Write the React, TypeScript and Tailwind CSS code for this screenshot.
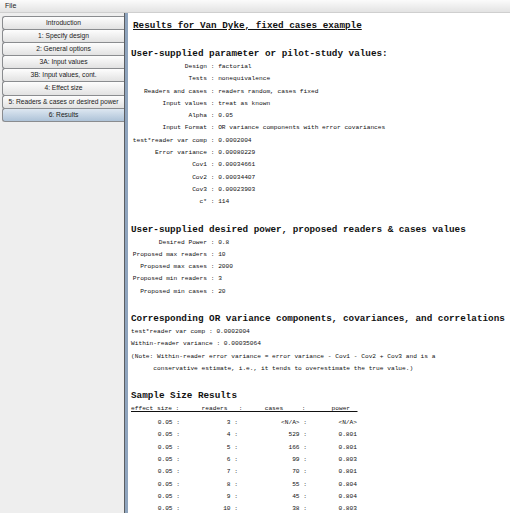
import React from 'react'

const tabs = [
  'Introduction',
  '1: Specify design',
  '2: General options',
  '3A: Input values',
  '3B: Input values, cont.',
  '4: Effect size',
  '5: Readers & cases or desired power',
  '6: Results',
]

const params: [string, string][] = [
  ['Design', 'factorial'],
  ['Tests', 'nonequivalence'],
  ['Readers and cases', 'readers random, cases fixed'],
  ['Input values', 'treat as known'],
  ['Alpha', '0.05'],
  ['Input Format', 'OR variance components with error covariances'],
  ['test*reader var comp', '0.0002004'],
  ['Error variance', '0.00080229'],
  ['Cov1', '0.00034661'],
  ['Cov2', '0.00034407'],
  ['Cov3', '0.00023903'],
  ['c*', '114'],
]

const desired: [string, string][] = [
  ['Desired Power', '0.8'],
  ['Proposed max readers', '10'],
  ['Proposed max cases', '2000'],
  ['Proposed min readers', '3'],
  ['Proposed min cases', '20'],
]

const results = [
  ['0.05', '3', '<N/A>', '<N/A>'],
  ['0.05', '4', '529', '0.801'],
  ['0.05', '5', '166', '0.801'],
  ['0.05', '6', '99', '0.803'],
  ['0.05', '7', '70', '0.801'],
  ['0.05', '8', '55', '0.804'],
  ['0.05', '9', '45', '0.804'],
  ['0.05', '10', '38', '0.803'],
]

const mono = "font-['Liberation_Mono',monospace]"

function KV({ rows }: { rows: [string, string][] }) {
  return (
    <div className="text-[6.2px] leading-[12.3px] whitespace-pre pl-[1px]">
      {rows.map(([k, v]) => (
        <div key={k} className="flex">
          <span className="w-[75px] shrink-0 text-right">{k}</span>
          <span>{' : ' + v}</span>
        </div>
      ))}
    </div>
  )
}

function Heading({ children }: { children: React.ReactNode }) {
  return <div className="mt-[14px] text-[9.3px] leading-[14px] font-bold whitespace-pre">{children}</div>
}

export default function App() {
  return (
    <div className="w-[510px] h-[513px] flex flex-col bg-[#eeeeee] overflow-hidden font-['Liberation_Sans',sans-serif]">
      {/* menu bar */}
      <div className="h-[13px] flex items-center px-[5px] text-[7px] text-[#222] bg-gradient-to-b from-[#fbfbfb] to-[#e3e3e3] border-b border-[#cfcfcf]">
        File
      </div>

      <div className="flex flex-1 min-h-0">
        {/* tabs on left */}
        <div className="w-[124px] pt-[3px] pl-[2px] flex flex-col">
          {tabs.map((t, i) => {
            const sel = i === tabs.length - 1
            return (
              <div
                key={t}
                className={`h-[14.1px] -mb-px flex items-center justify-center text-[6.7px] text-[#1a1a1a] border border-r-0 border-[#8a8c8f] rounded-l-[3px] whitespace-nowrap ${
                  sel
                    ? 'bg-gradient-to-b from-[#dde7f1] to-[#aec3d8]'
                    : 'bg-gradient-to-b from-[#fdfdfd] to-[#e2e2e2]'
                }`}
              >
                {t}
              </div>
            )
          })}
        </div>

        {/* divider */}
        <div className="w-[4px] flex">
          <div className="w-[1px] bg-[#5b5e62]" />
          <div className="flex-1 bg-[#8fa4bd]" />
        </div>

        {/* results */}
        <div className={`flex-1 bg-white pl-[3px] pt-[6px] text-[#111] ${mono} overflow-hidden`}>
          <div className="pl-[2px] text-[9.3px] leading-[14px] font-bold underline whitespace-pre">
            Results for Van Dyke, fixed cases example
          </div>

          <Heading>User-supplied parameter or pilot-study values:</Heading>
          <KV rows={params} />

          <Heading>User-supplied desired power, proposed readers &amp; cases values</Heading>
          <KV rows={desired} />

          <Heading>Corresponding OR variance components, covariances, and correlations</Heading>
          <div className="text-[6.2px] leading-[12.3px] whitespace-pre">
            <div>test*reader var comp : 0.0002004</div>
            <div>Within-reader variance : 0.00035064</div>
            <div>(Note: Within-reader error variance = error variance - Cov1 - Cov2 + Cov3 and is a</div>
            <div>{'      conservative estimate, i.e., it tends to overestimate the true value.)'}</div>
          </div>

          <Heading>Sample Size Results</Heading>
          <div className="text-[6.2px] leading-[12.3px] whitespace-pre">
            <div className="underline pb-[1.5px]">
              {'effect size :      readers   :      cases     :       power  '}
            </div>
            {results.map((r, i) => (
              <div key={i} className="grid grid-cols-[49px_58px_69px_50px]">
                <div className="text-right">{r[0] + ' :'}</div>
                <div className="text-right">{r[1] + ' :'}</div>
                <div className="text-right">{r[2] + ' :'}</div>
                <div className="text-right">{r[3]}</div>
              </div>
            ))}
          </div>
        </div>
      </div>
    </div>
  )
}
